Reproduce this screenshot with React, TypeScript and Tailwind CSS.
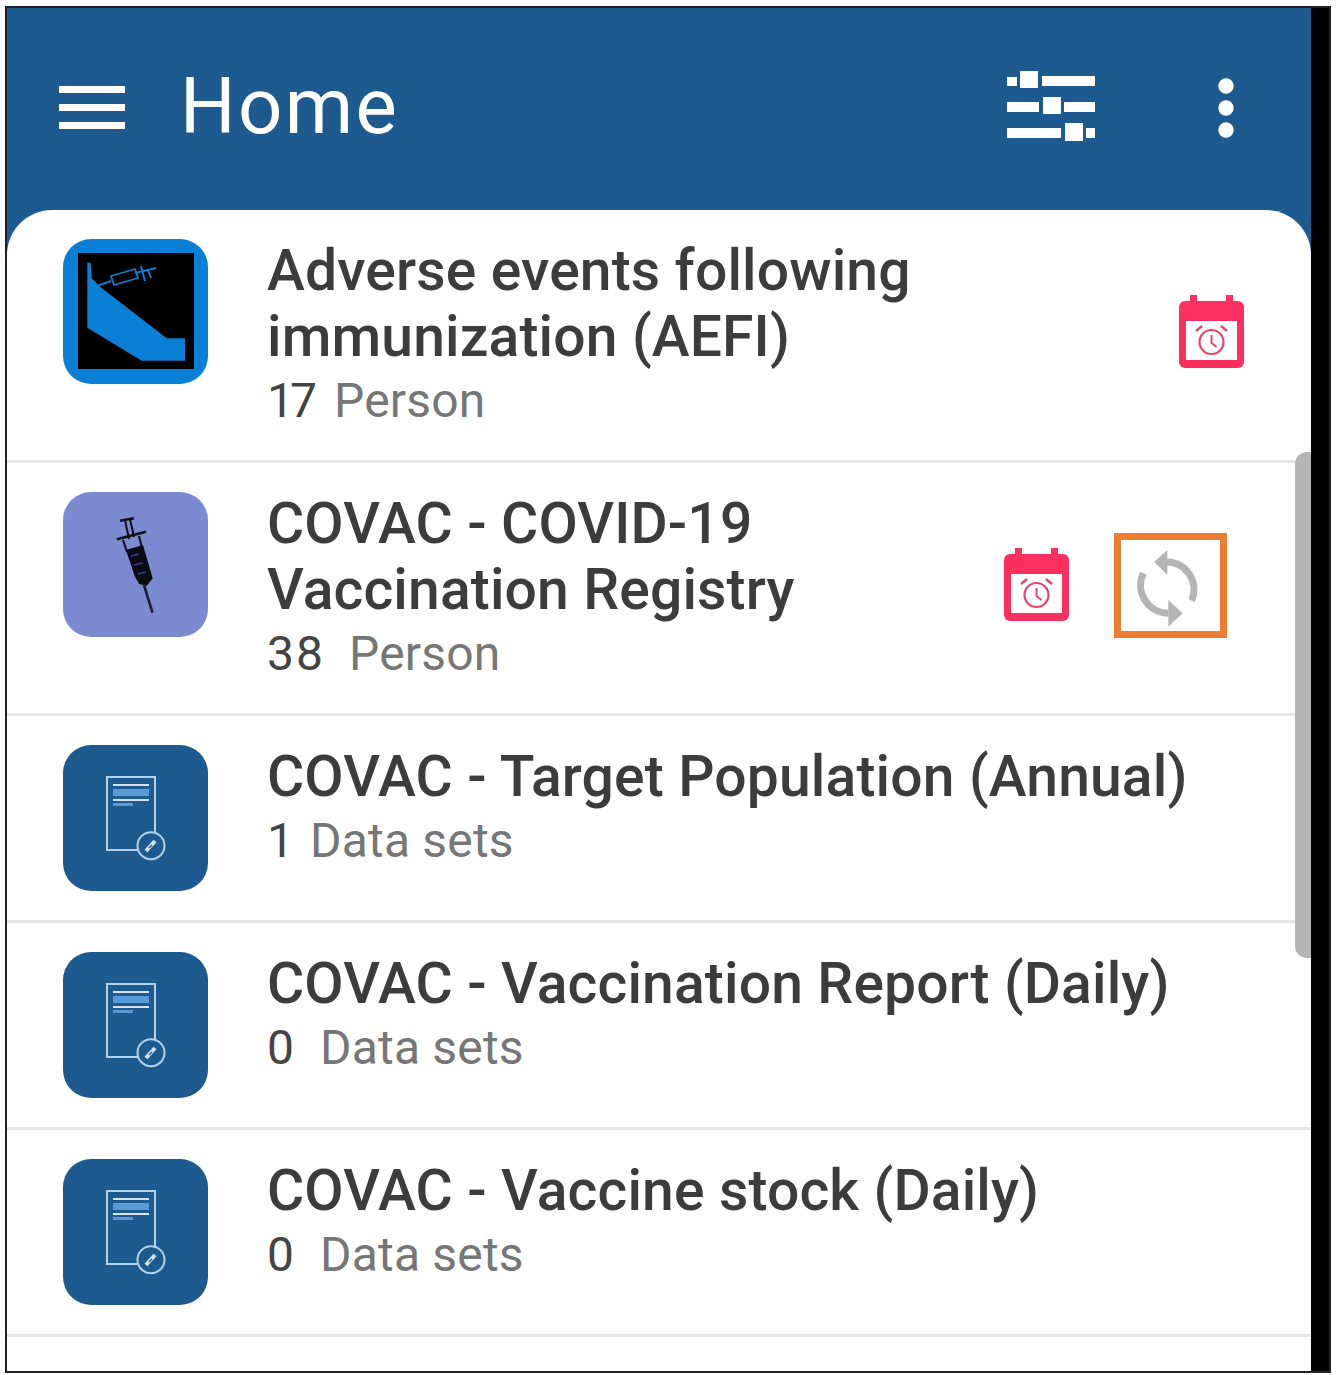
import React from 'react';

const CalendarIcon = () => (
  <svg width="66" height="74" viewBox="0 0 66 74" className="shrink-0">
    <path d="M11 0h7v7h-7zM47 0h7v7h-7z" fill="#fb2f60" />
    <rect x="0" y="6" width="65" height="67" rx="6" fill="#fb2f60" />
    <rect x="7" y="26" width="51" height="39" fill="#fff" />
    <circle cx="32.5" cy="47" r="12" fill="none" stroke="#e9456c" strokeWidth="2.2" />
    <path d="M32.5 40v8l5 4" fill="none" stroke="#e9456c" strokeWidth="2" />
    <path d="M17 36l6-5M48 36l-6-5" fill="none" stroke="#e9456c" strokeWidth="2.4" />
  </svg>
);

const SyncIcon = () => (
  <svg width="76" height="88" viewBox="0 0 76 88" className="mt-[7px] mr-[5px]">
    <path d="M35 16.7A28 28 0 0 1 61.7 55.7" fill="none" stroke="#b4b4b4" strokeWidth="7" />
    <path d="M13.3 28.3A28 28 0 0 0 38.3 68.3" fill="none" stroke="#b4b4b4" strokeWidth="7" />
    <polygon points="24.3,16.7 37.3,5 37.3,30" fill="#b4b4b4" />
    <polygon points="52.7,68.3 38.3,55 38.3,81.7" fill="#b4b4b4" />
  </svg>
);

const AefiIcon = () => (
  <div className="w-[145px] h-[145px] rounded-[28px] bg-[#0a7fd6] shrink-0">
    <svg width="145" height="145" viewBox="0 0 145 145">
      <rect x="15" y="14" width="116" height="116" fill="#000" />
      <polygon points="24.3,23.7 27.7,23.7 28.7,39.3 37,47.7 103.7,99.3 122,99.3 122,121.7 78.7,121.7 24.3,88.7" fill="#0a7fd6" />
      <path d="M31 48L48 42" stroke="#0a7fd6" strokeWidth="2" />
      <path d="M48 37l24-7 3 9-24 7z" fill="none" stroke="#0a7fd6" strokeWidth="1.8" />
      <path d="M72 34L93 29M78 27l4 15M85 31l3 8" stroke="#0a7fd6" strokeWidth="2" />
    </svg>
  </div>
);

const SyringeIcon = () => (
  <div className="w-[145px] h-[145px] rounded-[28px] bg-[#7a8bd1] shrink-0">
    <svg width="145" height="145" viewBox="0 0 145 145">
      <path d="M57 28.7L71 26.3M54 47.3L83 39.7" stroke="#111" strokeWidth="2.6" />
      <path d="M62 28L66 47M67 27L71 45" stroke="#111" strokeWidth="2" />
      <path d="M60 48l4 12M76 44l3 12" stroke="#111" strokeWidth="2" />
      <polygon points="63,58 80,53 89.7,86.3 83.7,94 76.3,92 72,85" fill="#0b0b14" />
      <path d="M68 64l8-2M71 73l9-2M75 82l8-2" stroke="#33408c" strokeWidth="1.6" />
      <path d="M81 93L89.5 120.7" stroke="#1c2030" strokeWidth="2.6" />
    </svg>
  </div>
);

const DatasetIcon = () => (
  <div className="w-[145px] h-[146px] rounded-[28px] bg-[#1c5a8f] shrink-0">
    <svg width="145" height="145" viewBox="0 0 145 145">
      <path d="M77 105H44V32h48v59" fill="none" stroke="#b5d2ea" strokeWidth="2" />
      <path d="M50 40h36M50 55h36" stroke="#d6e4f0" strokeWidth="2" />
      <rect x="50" y="44" width="36" height="7" fill="#5a9bd5" />
      <rect x="50" y="58" width="20" height="3" fill="#5a9bd5" />
      <circle cx="88" cy="100.7" r="13.5" fill="#1c5a8f" stroke="#b5d2ea" strokeWidth="2" />
      <path d="M83 106l9-10" stroke="#d6e4f0" strokeWidth="4" />
      <path d="M86 103l3-3" stroke="#1c5a8f" strokeWidth="1.5" />
    </svg>
  </div>
);

interface RowProps {
  icon: React.ReactNode;
  title: string[];
  count: string;
  countWidth: string;
  unit: string;
  height: string;
  right?: React.ReactNode;
}

const Row: React.FC<RowProps> = ({ icon, title, count, countWidth, unit, height, right }) => (
  <div className={`flex items-start pl-[56px] pt-[29px] border-b-[3px] border-[#e6e6e6] ${height}`}>
    {icon}
    <div className="ml-[59px] flex-1 -mt-[1px]">
      {title.map((line) => (
        <div key={line} className="text-[57px] leading-[66px] font-medium text-[#3c3c3c] tracking-[0.15px] whitespace-nowrap">
          {line}
        </div>
      ))}
      <div className="text-[48px] leading-[62px] flex tracking-[0.2px]">
        <span className={`text-[#444] ${countWidth}`}>{count}</span>
        <span className="text-[#767676]">{unit}</span>
      </div>
    </div>
    {right}
  </div>
);

export default function App() {
  return (
    <div className="w-[1338px] h-[1375px] bg-white pt-[6px] pl-[5px]" style={{ fontFamily: 'Roboto, "Noto Sans", sans-serif' }}>
      <div className="w-[1326px] h-[1367px] border-2 border-[#222] flex overflow-hidden">
        <div className="relative w-[1304px] bg-[#1c5a8f] flex flex-col">
          {/* Header */}
          <div className="h-[202px] flex items-start shrink-0">
            <svg width="66" height="44" viewBox="0 0 66 44" className="ml-[52px] mt-[78px]">
              <path d="M0 0h66v7H0zM0 18h66v7H0zM0 36h66v7H0z" fill="#fff" />
            </svg>
            <div className="ml-[55px] mt-[55px] text-[78px] leading-[88px] tracking-[2.3px] text-white">Home</div>
            <svg width="89" height="70" viewBox="0 0 89 70" className="ml-auto mt-[63px]">
              <path d="M0 6h10v9H0zM13 0h18v17H13zM35 5h53v10H35zM0 31h32v10H0zM36 26h18v17H36zM57 31h31v10H57zM0 57h54v10H0zM58 52h18v18H58zM79 57h9v10h-9z" fill="#fff" />
            </svg>
            <svg width="16" height="60" viewBox="0 0 16 60" className="ml-[122px] mr-[77px] mt-[70px]">
              <circle cx="8" cy="8" r="7.7" fill="#fff" />
              <circle cx="8" cy="30" r="7.7" fill="#fff" />
              <circle cx="8" cy="52" r="7.7" fill="#fff" />
            </svg>
          </div>

          {/* List */}
          <div className="flex-1 bg-white rounded-t-[45px]">
            <Row
              height="h-[253px]"
              icon={<AefiIcon />}
              title={['Adverse events following', 'immunization (AEFI)']}
              count="17"
              countWidth="w-[67px] tracking-[-4px]"
              unit="Person"
              right={<div className="mt-[56px] mr-[66px]"><CalendarIcon /></div>}
            />
            <Row
              height="h-[253px]"
              icon={<SyringeIcon />}
              title={['COVAC - COVID-19', 'Vaccination Registry']}
              count="38"
              countWidth="w-[82px] tracking-[2px]"
              unit="Person"
              right={
                <div className="flex items-start mt-[41px] mr-[84px]">
                  <div className="mt-[15px]"><CalendarIcon /></div>
                  <div className="ml-[44px] w-[113px] h-[105px] border-[7px] border-[#ed7d31] flex items-center justify-center">
                    <SyncIcon />
                  </div>
                </div>
              }
            />
            <Row height="h-[207px]" icon={<DatasetIcon />} title={['COVAC - Target Population (Annual)']} count="1" countWidth="w-[43px]" unit="Data sets" />
            <Row height="h-[207px]" icon={<DatasetIcon />} title={['COVAC - Vaccination Report (Daily)']} count="0" countWidth="w-[53px]" unit="Data sets" />
            <Row height="h-[207px]" icon={<DatasetIcon />} title={['COVAC - Vaccine stock (Daily)']} count="0" countWidth="w-[53px]" unit="Data sets" />
          </div>

          {/* Overlay scrollbar */}
          <div className="absolute right-0 top-[444px] w-[16px] h-[506px] bg-[#b5b5b5] rounded-l-[12px]" />
        </div>
        <div className="flex-1 bg-black" />
      </div>
    </div>
  );
}
